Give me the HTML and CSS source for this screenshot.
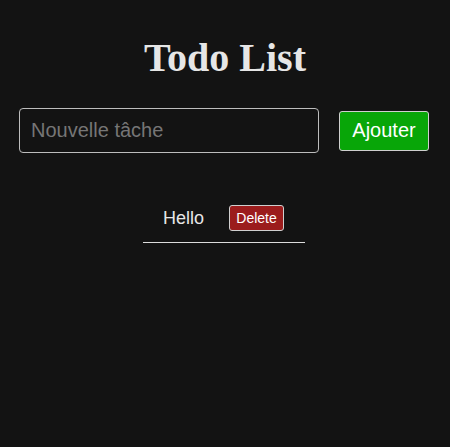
FILE: index.html
```html
<!DOCTYPE html>
<html lang="fr">
<head>
<meta charset="utf-8">
<title>Todo List</title>
<link rel="stylesheet" href="styles.css">
</head>
<body>
<main class="app">
  <h1 class="title">Todo List</h1>
  <form class="add-form">
    <input class="add-input" type="text" placeholder="Nouvelle tâche">
    <button class="add-btn" type="button">Ajouter</button>
  </form>
  <ul class="todo-list">
    <li class="todo-item">
      <span class="todo-text">Hello</span>
      <button class="del-btn" type="button">Delete</button>
    </li>
  </ul>
</main>
</body>
</html>
```

FILE: styles.css
```css
html, body {
  margin: 0;
  padding: 0;
  background: #131313;
  height: 100%;
}
body {
  color: #e4e4e4;
  font-family: "Liberation Sans", Arial, sans-serif;
}
.app {
  display: flex;
  flex-direction: column;
  align-items: center;
}
.title {
  margin: 35px 0 28px;
  font-family: "Liberation Serif", "Times New Roman", serif;
  font-weight: bold;
  font-size: 40px;
  line-height: 45px;
  color: #e6e6e6;
}
.add-form {
  display: flex;
  align-items: center;
  gap: 20px;
  margin: 0 2px 0 0;
}
.add-input {
  box-sizing: border-box;
  width: 300px;
  height: 45px;
  padding: 0 11px;
  border: 1px solid #bdbdbd;
  border-radius: 4px;
  background: #131313;
  color: #e4e4e4;
  font-family: "Liberation Sans", Arial, sans-serif;
  font-size: 20px;
  outline: none;
}
.add-input::placeholder {
  color: #767676;
}
.add-btn {
  box-sizing: border-box;
  width: 90px;
  height: 40px;
  padding: 0;
  border: 1px solid #cfcfcf;
  border-radius: 3px;
  background: #08a608;
  color: #ffffff;
  font-family: "Liberation Sans", Arial, sans-serif;
  font-size: 20px;
}
.todo-list {
  list-style: none;
  margin: 42px 2px 0 0;
  padding: 0;
}
.todo-item {
  display: flex;
  align-items: center;
  gap: 25px;
  padding: 10px 21px 11px 20px;
  border-bottom: 1px solid #dcdcdc;
}
.todo-text {
  font-size: 18px;
  color: #e6e6e6;
}
.del-btn {
  box-sizing: border-box;
  width: 55px;
  height: 26px;
  padding: 0;
  border: 1px solid #cfcfcf;
  border-radius: 3px;
  background: #9b1c1c;
  color: #ffffff;
  font-family: "Liberation Sans", Arial, sans-serif;
  font-size: 14px;
}
```
